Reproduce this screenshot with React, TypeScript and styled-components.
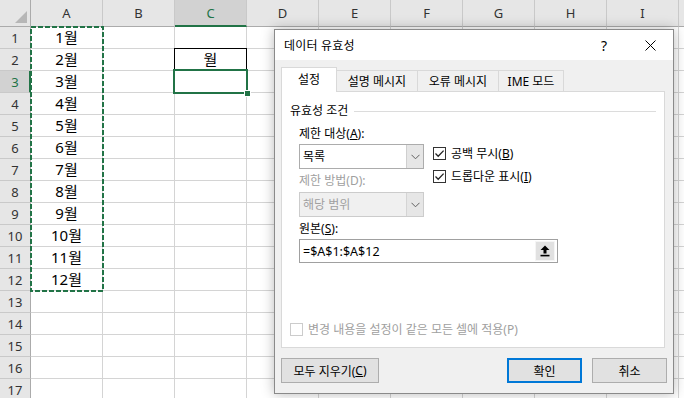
import React from 'react'
import styled, { createGlobalStyle } from 'styled-components'

const GlobalStyle = createGlobalStyle`
  html, body { margin: 0; padding: 0; background: #fff; }
  body {
    font-family: "Noto Sans", "Noto Sans CJK KR", sans-serif;
    color: #000;
  }
  * { box-sizing: border-box; }
`

const GREEN = '#217346'

// 시트 영역
const Screen = styled.div`
  position: relative;
  width: 684px;
  height: 398px;
  overflow: hidden;
  background: #fff;
`

const Sheet = styled.div`
  display: grid;
  grid-template-columns: 31px repeat(10, 72px);
  grid-template-rows: 27px repeat(17, 22px);
`

const Corner = styled.div`
  background: #e6e6e6;
  border-right: 1px solid #ababab;
  border-bottom: 1px solid #ababab;
  display: flex;
  align-items: flex-end;
  justify-content: flex-end;
  padding: 0 3px 3px 0;
  &::after {
    content: '';
    width: 0;
    height: 0;
    border-left: 12px solid transparent;
    border-bottom: 12px solid #b7b7b7;
  }
`

const ColHead = styled.div<{ $active?: boolean }>`
  background: ${p => (p.$active ? '#d2d2d2' : '#e6e6e6')};
  border-right: 1px solid #c9c9c9;
  border-bottom: ${p => (p.$active ? `2px solid ${GREEN}` : '1px solid #ababab')};
  color: ${p => (p.$active ? GREEN : '#333')};
  font-size: 13px;
  display: flex;
  align-items: center;
  justify-content: center;
  padding-top: ${p => (p.$active ? '1px' : '0')};
`

const RowHead = styled.div<{ $active?: boolean }>`
  background: ${p => (p.$active ? '#d2d2d2' : '#e6e6e6')};
  border-right: ${p => (p.$active ? `2px solid ${GREEN}` : '1px solid #ababab')};
  border-bottom: 1px solid #c9c9c9;
  color: ${p => (p.$active ? GREEN : '#333')};
  font-size: 13px;
  display: flex;
  align-items: center;
  justify-content: center;
  padding-left: ${p => (p.$active ? '1px' : '0')};
`

const Cell = styled.div<{ $boxed?: boolean }>`
  border-right: 1px solid ${p => (p.$boxed ? '#000' : '#d4d4d4')};
  border-bottom: 1px solid ${p => (p.$boxed ? '#000' : '#d4d4d4')};
  box-shadow: ${p => (p.$boxed ? '-1px 0 0 #000, 0 -1px 0 #000, -1px -1px 0 #000' : 'none')};
  font-size: 15px;
  line-height: 21px;
  text-align: center;
  white-space: nowrap;
  overflow: hidden;
`

const Ants = styled.svg`
  position: absolute;
  left: 30px;
  top: 26px;
`

const Selection = styled.div`
  position: absolute;
  left: 173px;
  top: 69px;
  width: 75px;
  height: 25px;
  border: 2px solid ${GREEN};
`

const FillHandle = styled.div`
  position: absolute;
  right: -5px;
  bottom: -5px;
  width: 7px;
  height: 7px;
  background: ${GREEN};
  border: 1px solid #fff;
`

// 대화상자
const Dialog = styled.div`
  position: absolute;
  left: 274px;
  top: 29px;
  width: 400px;
  height: 365px;
  background: #f0f0f0;
  border: 1px solid #8a8a8a;
  box-shadow: 0 0 12px rgba(0, 0, 0, 0.28);
  display: flex;
  flex-direction: column;
  font-size: 12px;
`

const TitleBar = styled.div`
  height: 30px;
  background: #fff;
  display: flex;
  align-items: center;
  padding-left: 9px;
`

const Title = styled.div`
  flex: 1;
  font-size: 12px;
  letter-spacing: 0.2px;
`

const TitleButton = styled.div<{ $w: number }>`
  width: ${p => p.$w}px;
  height: 30px;
  display: flex;
  align-items: center;
  justify-content: center;
  font-size: 14px;
`

const Body = styled.div`
  flex: 1;
  display: flex;
  flex-direction: column;
  padding: 8px 6px 9px 6px;
`

const Tabs = styled.div`
  display: flex;
  align-items: flex-end;
  height: 24px;
  margin-bottom: -1px;
  position: relative;
  z-index: 1;
`

const Tab = styled.div<{ $active?: boolean; $w: number }>`
  width: ${p => p.$w}px;
  height: ${p => (p.$active ? 25 : 22)}px;
  background: ${p => (p.$active ? '#fff' : '#f0f0f0')};
  border: 1px solid #d9d9d9;
  border-bottom: ${p => (p.$active ? 'none' : '1px solid #d9d9d9')};
  margin-left: ${p => (p.$active ? 0 : -1)}px;
  display: flex;
  align-items: center;
  justify-content: center;
  padding-bottom: ${p => (p.$active ? 2 : 0)}px;
  white-space: nowrap;
`

const Panel = styled.div`
  height: 257px;
  margin-right: 2px;
  background: #fff;
  border: 1px solid #d9d9d9;
  display: flex;
  flex-direction: column;
  padding: 11px 8px 10px 8px;
`

const GroupTitle = styled.div`
  display: flex;
  align-items: center;
  gap: 6px;
  height: 16px;
  line-height: 16px;
  &::after {
    content: '';
    flex: 1;
    border-top: 1px solid #dcdcdc;
  }
`

const Form = styled.div`
  margin-left: 9px;
  display: flex;
  flex-direction: column;
`

const Label = styled.div<{ $disabled?: boolean; $mt: number }>`
  height: 16px;
  line-height: 16px;
  margin-top: ${p => p.$mt}px;
  color: ${p => (p.$disabled ? '#a0a0a0' : '#000')};
  white-space: nowrap;
`

const Key = styled.span`
  text-decoration: underline;
`

const Row = styled.div`
  display: flex;
  align-items: flex-start;
  gap: 9px;
  margin-top: 1px;
`

const Column = styled.div`
  width: 125px;
  display: flex;
  flex-direction: column;
`

const Select = styled.div<{ $disabled?: boolean; $mt: number }>`
  height: 25px;
  margin-top: ${p => p.$mt}px;
  display: flex;
  border: 1px solid ${p => (p.$disabled ? '#cccccc' : '#acacac')};
  background: ${p => (p.$disabled ? '#f0f0f0' : '#fff')};
  color: ${p => (p.$disabled ? '#a0a0a0' : '#000')};
`

const SelectText = styled.div`
  flex: 1;
  padding-left: 3px;
  line-height: 23px;
  font-size: 12px;
`

const SelectArrow = styled.div<{ $disabled?: boolean }>`
  width: 17px;
  background: #e6e6e6;
  border-left: 1px solid ${p => (p.$disabled ? '#d4d4d4' : '#cfcfcf')};
  display: flex;
  align-items: center;
  justify-content: center;
`

const CheckColumn = styled.div`
  display: flex;
  flex-direction: column;
  gap: 7px;
  padding-top: 2px;
`

const CheckRow = styled.div<{ $disabled?: boolean }>`
  display: flex;
  align-items: center;
  gap: 5px;
  height: 16px;
  color: ${p => (p.$disabled ? '#a0a0a0' : '#000')};
  white-space: nowrap;
`

const Box = styled.div<{ $disabled?: boolean }>`
  width: 13px;
  height: 13px;
  border: 1px solid ${p => (p.$disabled ? '#cccccc' : '#333')};
  background: #fff;
  display: flex;
  align-items: center;
  justify-content: center;
`

const SourceInput = styled.div`
  width: 259px;
  height: 24px;
  margin-top: 2px;
  border: 1px solid #a0a0a0;
  background: #fff;
  display: flex;
  align-items: center;
  padding: 1px 2px 1px 3px;
  font-size: 12.5px;
`

const SourceText = styled.div`
  flex: 1;
`

const RefButton = styled.div`
  width: 20px;
  height: 20px;
  background: #e1e1e1;
  border: 1px solid #f5f5f5;
  display: flex;
  align-items: center;
  justify-content: center;
`

const BottomCheck = styled(CheckRow)`
  margin-top: auto;
`

const Footer = styled.div`
  display: flex;
  align-items: center;
  gap: 10px;
  margin-top: 10px;
`

const Button = styled.div<{ $w: number; $primary?: boolean }>`
  width: ${p => p.$w}px;
  height: 25px;
  background: #e1e1e1;
  border: ${p => (p.$primary ? '2px solid #0078d7' : '1px solid #adadad')};
  display: flex;
  align-items: center;
  justify-content: center;
  white-space: nowrap;
`

const Spacer = styled.div`
  flex: 1;
`

const Check = () => (
  <svg width="11" height="11" viewBox="0 0 11 11">
    <path d="M1.5 5.5 L4.2 8.2 L9.6 2.6" fill="none" stroke="#222" strokeWidth="1.3" />
  </svg>
)

const Chevron = () => (
  <svg width="9" height="6" viewBox="0 0 9 6">
    <path d="M0.5 0.8 L4.5 4.8 L8.5 0.8" fill="none" stroke="#606060" strokeWidth="1" />
  </svg>
)

// 화면 밖으로 잘리는 J열은 머리글 글자 없이 둔다
const cols = ['A', 'B', 'C', 'D', 'E', 'F', 'G', 'H', 'I', '']
const rows = Array.from({ length: 17 }, (_, i) => i + 1)

const cellText = (col: string, row: number) => {
  if (col === 'A' && row <= 12) return `${row}월`
  if (col === 'C' && row === 2) return '월'
  return ''
}

const App: React.FC = () => {
  return (
    <>
      <GlobalStyle />
      <Screen>
        {/* 시트 */}
        <Sheet>
          <Corner />
          {cols.map((c, i) => (
            <ColHead key={i} $active={c === 'C'}>{c}</ColHead>
          ))}
          {rows.map(r => (
            <React.Fragment key={r}>
              <RowHead $active={r === 3}>{r}</RowHead>
              {cols.map((c, i) => (
                <Cell key={i} $boxed={c === 'C' && r === 2}>{cellText(c, r)}</Cell>
              ))}
            </React.Fragment>
          ))}
        </Sheet>
        <Ants width="74" height="266">
          <rect x="1" y="1" width="72" height="264" fill="none" stroke={GREEN} strokeWidth="2" strokeDasharray="5 2" />
        </Ants>
        <Selection>
          <FillHandle />
        </Selection>

        {/* 데이터 유효성 대화상자 */}
        <Dialog>
          <TitleBar>
            <Title>데이터 유효성</Title>
            <TitleButton $w={46}>?</TitleButton>
            <TitleButton $w={46}>
              <svg width="11" height="11" viewBox="0 0 11 11">
                <path d="M0.5 0.5 L10.5 10.5 M10.5 0.5 L0.5 10.5" stroke="#000" strokeWidth="1" />
              </svg>
            </TitleButton>
          </TitleBar>
          <Body>
            <Tabs>
              <Tab $active $w={56}>설정</Tab>
              <Tab $w={82}>설명 메시지</Tab>
              <Tab $w={82}>오류 메시지</Tab>
              <Tab $w={66}>IME 모드</Tab>
            </Tabs>
            <Panel>
              <GroupTitle>유효성 조건</GroupTitle>
              <Form>
                <Label $mt={7}>제한 대상(<Key>A</Key>):</Label>
                <Row>
                  <Column>
                    <Select $mt={1}>
                      <SelectText>목록</SelectText>
                      <SelectArrow><Chevron /></SelectArrow>
                    </Select>
                    <Label $mt={4} $disabled>제한 방법(D):</Label>
                    <Select $mt={3} $disabled>
                      <SelectText>해당 범위</SelectText>
                      <SelectArrow $disabled><Chevron /></SelectArrow>
                    </Select>
                  </Column>
                  <CheckColumn>
                    <CheckRow>
                      <Box><Check /></Box>
                      <span>공백 무시(<Key>B</Key>)</span>
                    </CheckRow>
                    <CheckRow>
                      <Box><Check /></Box>
                      <span>드롭다운 표시(<Key>I</Key>)</span>
                    </CheckRow>
                  </CheckColumn>
                </Row>
                <Label $mt={4}>원본(<Key>S</Key>):</Label>
                <SourceInput>
                  <SourceText>=$A$1:$A$12</SourceText>
                  <RefButton>
                    <svg width="10" height="12" viewBox="0 0 10 12">
                      <path d="M5 0.5 L9.5 5 L6.5 5 L6.5 8.5 L3.5 8.5 L3.5 5 L0.5 5 Z" fill="#000" />
                      <rect x="0.5" y="9.8" width="9" height="1.6" fill="#000" />
                    </svg>
                  </RefButton>
                </SourceInput>
              </Form>
              <BottomCheck $disabled>
                <Box $disabled />
                <span>변경 내용을 설정이 같은 모든 셀에 적용(P)</span>
              </BottomCheck>
            </Panel>
            <Footer>
              <Button $w={98}>모두 지우기(<Key>C</Key>)</Button>
              <Spacer />
              <Button $w={75} $primary>확인</Button>
              <Button $w={75}>취소</Button>
            </Footer>
          </Body>
        </Dialog>
      </Screen>
    </>
  )
}

export default App
